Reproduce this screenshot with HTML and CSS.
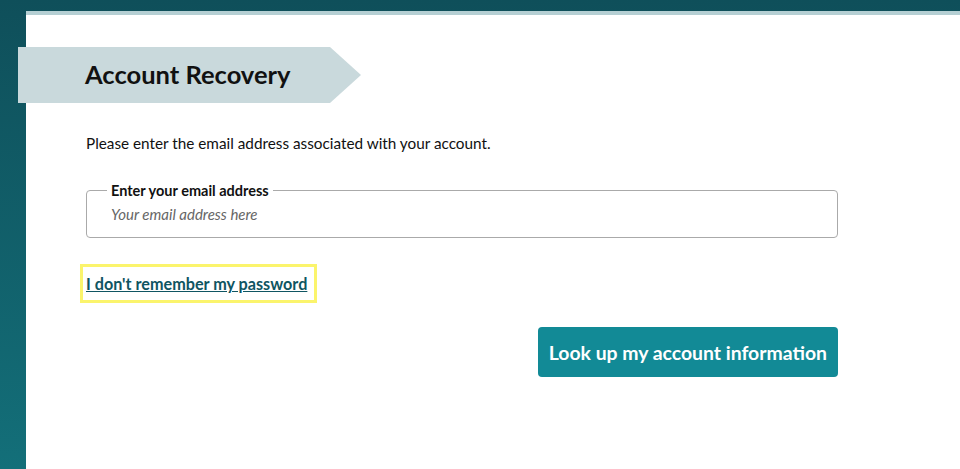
FILE: index.html
```html
<!DOCTYPE html>
<html lang="en">
<head>
    <meta charset="UTF-8">
    <meta name="viewport" content="width=device-width, initial-scale=1.0">
    <title>Account Recovery</title>
    <link rel="stylesheet" href="styles.css">
</head>
<body>

<div class="panel">
    <div class="content">
        <div class="banner">
            <h1>Account Recovery</h1>
        </div>

        <p class="intro">Please enter the email address associated with your account.</p>

        <fieldset class="field">
            <legend>Enter your email address</legend>
            <input type="email" id="email" placeholder="Your email address here">
        </fieldset>

        <div class="forgot">
            <a href="#">I don't remember my password</a>
        </div>

        <div class="actions">
            <button type="button">Look up my account information</button>
        </div>
    </div>
</div>

</body>
</html>
```

FILE: styles.css
```css
html, body {
    height: 100%;
}
body {
    margin: 0;
    background: linear-gradient(to bottom, #0f4f5a, #136f79);
    font-family: Lato, "Noto Sans", sans-serif;
    color: #111;
    overflow: hidden;
}
.panel {
    margin: 11px 0 0 26px;
    min-height: 100%;
    background: #fff;
    border-top: 4px solid #b5cfd3;
}
.content {
    width: 752px;
    padding: 32px 0 0 60px;
}
.banner {
    margin-left: -68px;
    width: 343px;
    height: 56px;
    background: #c9d9dc;
    clip-path: polygon(0 0, 312px 0, 100% 50%, 312px 100%, 0 100%);
    display: flex;
    align-items: center;
}
.banner h1 {
    margin: 0 0 2px 67px;
    font-size: 25.5px;
    font-weight: 700;
}
.intro {
    margin: 31px 0 0;
    font-size: 15.3px;
}
.field {
    margin: 30px 0 0;
    padding: 0 20px 14px;
    border: 1px solid #aaa;
    border-radius: 4px;
}
.field legend {
    padding: 0 4px;
    font-size: 14.5px;
    font-weight: 700;
}
.field input {
    width: 100%;
    margin: 6px 0 0;
    padding: 0 4px;
    border: none;
    outline: none;
    font-family: inherit;
    font-size: 15px;
    font-style: italic;
}
.field input::placeholder {
    color: #666;
}
.forgot {
    margin-top: 26px;
    display: flex;
}
.forgot a {
    margin-left: -6px;
    padding: 7px 7px 7px 3px;
    border: 3px solid #fbf46c;
    color: #0f5562;
    font-size: 16.2px;
    font-weight: 700;
}
.actions {
    margin-top: 24px;
    display: flex;
    justify-content: flex-end;
}
.actions button {
    height: 50px;
    padding: 0 11px;
    border: none;
    border-radius: 4px;
    background: #128a96;
    color: #fff;
    font-family: inherit;
    font-size: 19.4px;
    font-weight: 700;
    cursor: pointer;
}
```
